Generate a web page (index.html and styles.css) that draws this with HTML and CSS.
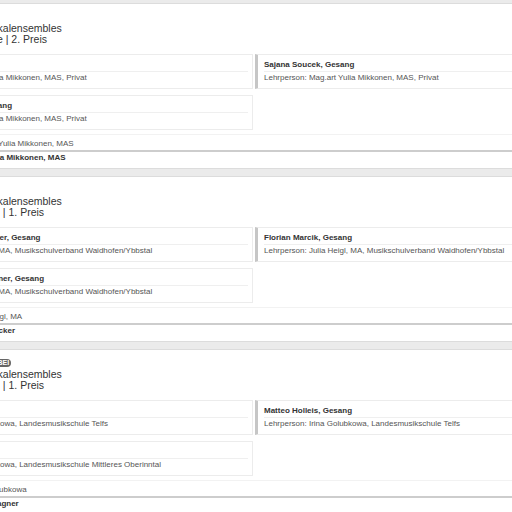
FILE: index.html
```html
<!DOCTYPE html>
<html>
<head>
    <meta charset="utf-8">
    <title>Ergebnisse Vokalensembles</title>
    <link rel="stylesheet" href="styles.css">
</head>
<body>
    <div class="page">
        <!-- Ensemble 1 -->
        <div class="entry">
            <div class="tags"><span class="tag">WIEN</span></div>
            <h2 class="title">Sparte Gesang – Vokalensembles<br>Gruppe III, 81 Punkte | 2. Preis</h2>
            <div class="members">
                <div class="member">
                    <div class="name">Lea Huber, Gesang</div>
                    <div class="teacher">Lehrperson: Mag.art Yulia Mikkonen, MAS, Privat</div>
                </div>
                <div class="member">
                    <div class="name">Sajana Soucek, Gesang</div>
                    <div class="teacher">Lehrperson: Mag.art Yulia Mikkonen, MAS, Privat</div>
                </div>
                <div class="member">
                    <div class="name">Magdalena Huber, Gesang</div>
                    <div class="teacher">Lehrperson: Mag.art Yulia Mikkonen, MAS, Privat</div>
                </div>
            </div>
            <div class="accomp">Klavierbegleitung: Mag.art Yulia Mikkonen, MAS</div>
            <div class="lead">Chorleitung: Mag.art. Yulia Mikkonen, MAS</div>
        </div>

        <!-- Ensemble 2 -->
        <div class="entry">
            <div class="tags"><span class="tag">NIEDERÖSTERREICH</span></div>
            <h2 class="title">Sparte Gesang – Vokalensembles<br>Gruppe II, 94 Punkte | 1. Preis</h2>
            <div class="members">
                <div class="member">
                    <div class="name">Lena-Sophie Ettenberger, Gesang</div>
                    <div class="teacher">Lehrperson: Julia Heigl, MA, Musikschulverband Waidhofen/Ybbstal</div>
                </div>
                <div class="member">
                    <div class="name">Florian Marcik, Gesang</div>
                    <div class="teacher">Lehrperson: Julia Heigl, MA, Musikschulverband Waidhofen/Ybbstal</div>
                </div>
                <div class="member">
                    <div class="name">Anna-Sophie Hinterleitner, Gesang</div>
                    <div class="teacher">Lehrperson: Julia Heigl, MA, Musikschulverband Waidhofen/Ybbstal</div>
                </div>
            </div>
            <div class="accomp">Klavierbegleitung: Julia Heigl, MA</div>
            <div class="lead">Chorleitung: Theresa Stöcker</div>
        </div>

        <!-- Ensemble 3 -->
        <div class="entry">
            <div class="tags"><span class="tag">BUNDESWETTBEWERB DABEI</span></div>
            <h2 class="title">Sparte Gesang – Vokalensembles<br>Gruppe II, 96 Punkte | 1. Preis</h2>
            <div class="members">
                <div class="member">
                    <div class="name">Anna Rainer, Gesang</div>
                    <div class="teacher">Lehrperson: Irina Golubkowa, Landesmusikschule Telfs</div>
                </div>
                <div class="member">
                    <div class="name">Matteo Holleis, Gesang</div>
                    <div class="teacher">Lehrperson: Irina Golubkowa, Landesmusikschule Telfs</div>
                </div>
                <div class="member">
                    <div class="name">Lea Gstrein, Gesang</div>
                    <div class="teacher">Lehrperson: Irina Golubkowa, Landesmusikschule Mittleres Oberinntal</div>
                </div>
            </div>
            <div class="accomp">Klavierbegleitung: Irina Golubkowa</div>
            <div class="lead">Chorleitung: Mag. Eva Wagner</div>
        </div>
    </div>
</body>
</html>
```

FILE: styles.css
```css
*{margin: 0; padding: 0; box-sizing: border-box;}
body{background: #ebebeb; font-family: "Liberation Sans", Arial, sans-serif; overflow: hidden;}

/* the list is wider than the window, it starts left of the screen */
.page{width: 728px; margin-left: -110px; padding-top: 3px;}

.entry{background: #fff; border: 1px solid #dcdcdc; padding: 9px 12px 4px; margin-bottom: 7px;}

.tags{height: 9px; line-height: 8px;}
.tag{display: inline-block; vertical-align: top; background: #666; color: #fff;
    font-size: 7px; font-weight: bold; line-height: 8px; padding: 0 2px; border-radius: 4px; white-space: nowrap;}

.title{font-size: 10.5px; line-height: 11px; font-weight: normal; color: #333; margin-top: 1px; white-space: nowrap;}

.members{display: grid; grid-template-columns: 1fr 1fr; column-gap: 2px; row-gap: 6px; margin-top: 9px;}
.member{border: 1px solid #ececec; border-left: 3px solid #c6c6c6; padding: 4px 4px 4px 6px;
    font-size: 8px; line-height: 12px; white-space: nowrap;}
.member .name{font-weight: bold; color: #333; border-bottom: 1px solid #efefef;}
.member .teacher{color: #555;}

.accomp{margin-top: 4px; border-top: 1px solid #f2f2f2; padding-top: 3px; border-bottom: 2px solid #cdcdcd;
    font-size: 8px; line-height: 12px; color: #555; white-space: nowrap;}
.lead{font-size: 8px; line-height: 12px; font-weight: bold; color: #333; white-space: nowrap;}
```
